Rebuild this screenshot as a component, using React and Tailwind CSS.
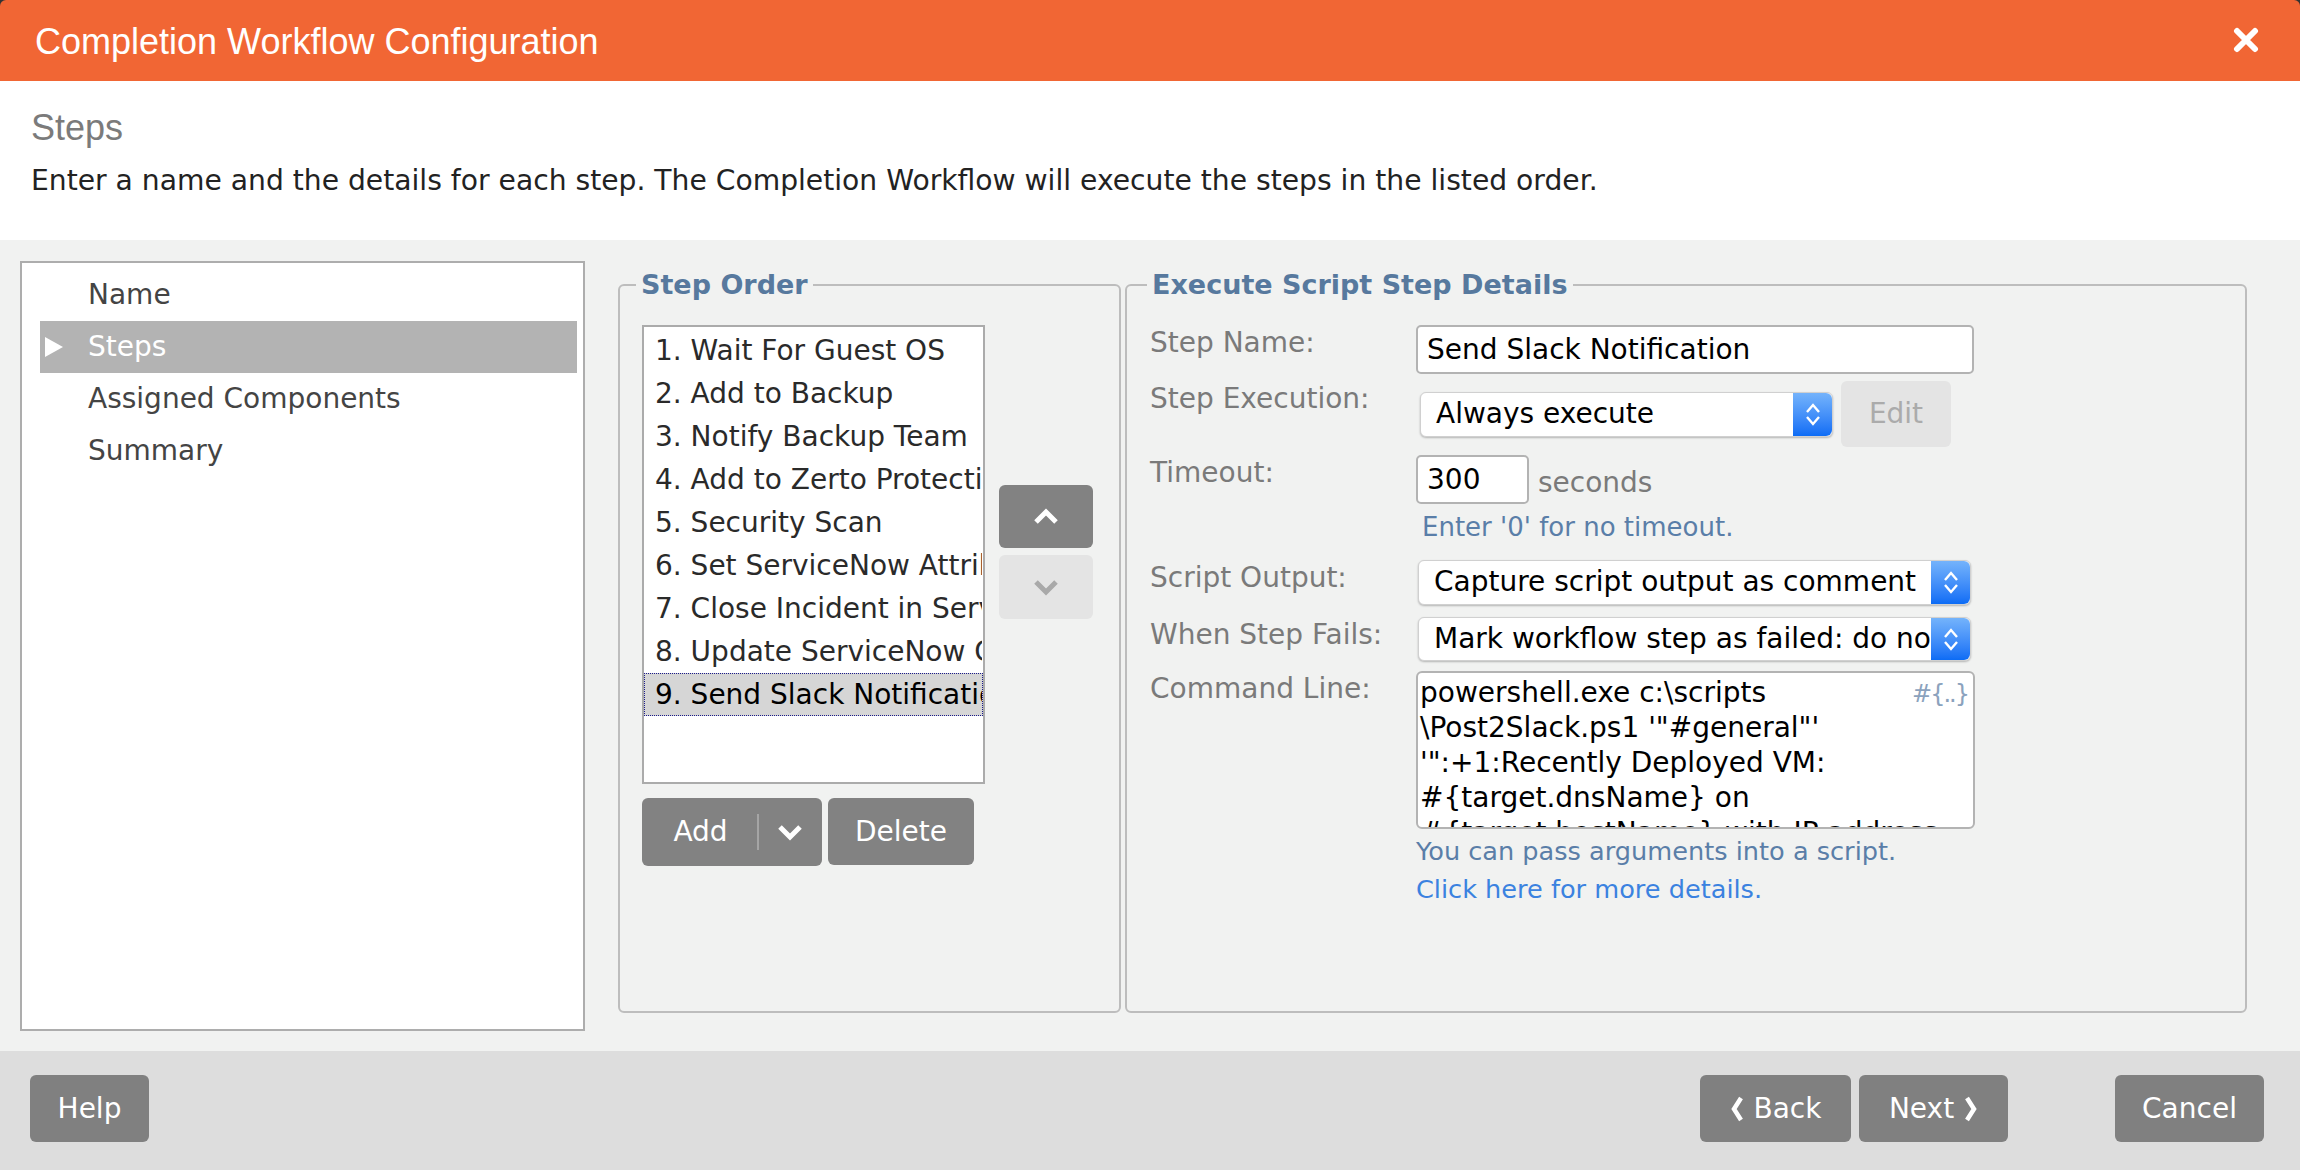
import React from "react";

const BODY = "font-['DejaVu_Sans',Verdana,sans-serif]";
const ARIAL = "font-['Liberation_Sans',Arial,sans-serif]";

const steps = [
  "1. Wait For Guest OS",
  "2. Add to Backup",
  "3. Notify Backup Team",
  "4. Add to Zerto Protection Group",
  "5. Security Scan",
  "6. Set ServiceNow Attributes",
  "7. Close Incident in ServiceNow",
  "8. Update ServiceNow CMDB",
  "9. Send Slack Notification",
];

const Chevron = ({ dir = "down", className = "", strokeWidth = 5 }) => {
  const pts = {
    up: "3,15 13,5 23,15",
    down: "3,5 13,15 23,5",
  }[dir];
  return (
    <svg viewBox="0 0 26 20" className={className} fill="none">
      <polyline points={pts} stroke="currentColor" strokeWidth={strokeWidth} strokeLinejoin="miter" strokeLinecap="butt" />
    </svg>
  );
};

const SideChevron = ({ dir = "left" }) => (
  <svg viewBox="0 0 14 26" className="w-[14px] h-[26px]" fill="none">
    <polyline
      points={dir === "left" ? "11,2 4,13 11,24" : "3,2 10,13 3,24"}
      stroke="currentColor"
      strokeWidth="4.5"
    />
  </svg>
);

const Stepper = () => (
  <div className="w-[39px] self-stretch rounded-r-[6px] bg-gradient-to-b from-[#74b3fb] to-[#0b6cf5] flex flex-col items-center justify-center gap-[3px] text-white">
    <svg viewBox="0 0 16 10" className="w-[16px] h-[10px]" fill="none">
      <polyline points="2,9 8,2 14,9" stroke="currentColor" strokeWidth="2.4" />
    </svg>
    <svg viewBox="0 0 16 10" className="w-[16px] h-[10px]" fill="none">
      <polyline points="2,1 8,8 14,1" stroke="currentColor" strokeWidth="2.4" />
    </svg>
  </div>
);

const Select = ({ value, className = "" }) => (
  <div className={`flex bg-white rounded-[6px] border border-[#d0d0d0] shadow-[0_1px_2px_rgba(0,0,0,0.25)] ${className}`}>
    <div className="flex-1 overflow-hidden whitespace-nowrap pl-[15px] text-black leading-[42px]">{value}</div>
    <Stepper />
  </div>
);

const GreyButton = ({ children, className = "" }) => (
  <button className={`bg-[#808080] text-white rounded-[6px] h-[67px] flex items-center justify-center text-[28px] ${BODY} ${className}`}>
    {children}
  </button>
);

const Label = ({ children }) => (
  <div className="w-[266px] shrink-0 leading-[36px] text-[#7a7a7a]">{children}</div>
);

export default function App() {
  return (
    <div className={`w-[2300px] h-[1170px] bg-[#333] overflow-hidden ${BODY}`}>
      <div className="h-full flex flex-col rounded-t-[6px] overflow-hidden">
        {/* header */}
        <div className="h-[81px] shrink-0 bg-[#f16634] flex items-center justify-between pl-[35px] pr-[41px] pt-[3px]">
          <h1 className={`${ARIAL} text-white text-[36px] leading-[36px]`}>Completion Workflow Configuration</h1>
          <svg viewBox="0 0 26 26" className="w-[26px] h-[26px] -mt-[4px]">
            <path d="M4 4 L22 22 M22 4 L4 22" stroke="white" strokeWidth="6" strokeLinecap="round" />
          </svg>
        </div>

        {/* intro */}
        <div className="h-[159px] shrink-0 bg-white pl-[31px] pt-[29px]">
          <h2 className={`${ARIAL} text-[36px] leading-[36px] text-[#7b7b7b]`}>Steps</h2>
          <p className="mt-[18px] text-[28.2px] leading-[34px] text-[#222]">
            Enter a name and the details for each step. The Completion Workflow will execute the steps in the listed order.
          </p>
        </div>

        {/* body */}
        <div className="h-[811px] shrink-0 bg-[#f1f2f1] flex items-start pt-[21px] pl-[20px] text-[28px]">
          {/* nav */}
          <div className="w-[565px] h-[770px] shrink-0 bg-white border-2 border-[#adadad] pt-[6px] pr-[6px] pl-[18px]">
            {["Name", "Steps", "Assigned Components", "Summary"].map((n) => {
              const active = n === "Steps";
              return (
                <div
                  key={n}
                  className={`h-[52px] flex items-center ${active ? "bg-[#b3b3b3] text-white" : "text-[#444]"}`}
                >
                  <div className="w-[48px] flex justify-center pl-[2px] pr-[22px]">
                    {active && (
                      <svg viewBox="0 0 18 20" className="w-[18px] h-[20px] shrink-0">
                        <polygon points="0,0 18,10 0,20" fill="white" />
                      </svg>
                    )}
                  </div>
                  <span className="leading-[52px]">{n}</span>
                </div>
              );
            })}
          </div>

          {/* step order */}
          <fieldset className="ml-[33px] mt-[8px] w-[503px] h-[744px] shrink-0 border-2 border-[#bdbdbd] rounded-[6px]">
            <legend className="ml-[16px] px-[5px] text-[27px] leading-[32px] font-bold text-[#57799e]">Step Order</legend>
            <div className="pl-[22px] pt-[24px]">
              <div className="flex items-start">
                <div className="w-[343px] h-[459px] bg-white border-2 border-[#ababab] pt-[2px] overflow-hidden">
                  {steps.map((s, i) => {
                    const sel = i === steps.length - 1;
                    return (
                      <div
                        key={s}
                        className={`h-[43px] leading-[41px] whitespace-nowrap overflow-hidden pl-[10px] ${
                          sel
                            ? "bg-[#d6d6d6] text-black border border-dotted border-[#1b1b8a]"
                            : "text-[#2a2a2a] border border-transparent"
                        }`}
                      >
                        {s}
                      </div>
                    );
                  })}
                </div>
                <div className="ml-[14px] mt-[160px] flex flex-col gap-[7px]">
                  <button className="w-[94px] h-[63px] rounded-[6px] bg-[#828282] text-white flex items-center justify-center">
                    <Chevron dir="up" className="w-[26px] h-[20px]" />
                  </button>
                  <button className="w-[94px] h-[64px] rounded-[6px] bg-[#e4e4e4] text-[#a9a9a9] flex items-center justify-center">
                    <Chevron dir="down" className="w-[26px] h-[20px]" />
                  </button>
                </div>
              </div>
              <div className="mt-[14px] flex gap-[6px]">
                <div className="w-[180px] h-[68px] rounded-[6px] bg-[#828282] text-white flex items-center">
                  <span className="w-[115px] text-center pl-[2px]">Add</span>
                  <span className="w-[2px] h-[36px] bg-[#a5a5a5]" />
                  <span className="flex-1 flex justify-center pr-[2px]">
                    <Chevron dir="down" className="w-[26px] h-[20px]" />
                  </span>
                </div>
                <div className="w-[146px] h-[67px] rounded-[6px] bg-[#828282] text-white flex items-center justify-center">
                  Delete
                </div>
              </div>
            </div>
          </fieldset>

          {/* details */}
          <fieldset className="ml-[4px] mt-[8px] w-[1122px] h-[744px] shrink-0 border-2 border-[#bdbdbd] rounded-[6px]">
            <legend className="ml-[20px] px-[5px] text-[27px] leading-[32px] font-bold text-[#57799e]">
              Execute Script Step Details
            </legend>
            <div className="pl-[23px] pt-[24px]">
              <div className="flex items-start">
                <Label>Step Name:</Label>
                <div className="w-[558px] h-[49px] bg-white border-2 border-[#b3b3b3] rounded-[5px] pl-[9px] leading-[45px] text-black">
                  Send Slack Notification
                </div>
              </div>

              <div className="mt-[7px] flex items-start">
                <Label>Step Execution:</Label>
                <div className="flex items-center h-[66px]">
                  <Select value="Always execute" className="ml-[4px] w-[413px] h-[45px]" />
                  <div className="ml-[8px] w-[110px] h-[66px] rounded-[6px] bg-[#e4e4e4] text-[#ababab] flex items-center justify-center">
                    Edit
                  </div>
                </div>
              </div>

              <div className="mt-[8px] flex items-start">
                <Label>Timeout:</Label>
                <div className="w-[113px] h-[49px] bg-white border-2 border-[#b3b3b3] rounded-[5px] pl-[9px] leading-[45px] text-black">
                  300
                </div>
                <span className="ml-[9px] leading-[55px] text-[#7a7a7a]">seconds</span>
              </div>
              <div className="ml-[272px] mt-0 text-[26px] leading-[34px] text-[#5a7ea8]">Enter '0' for no timeout.</div>

              <div className="mt-[16px] flex items-start">
                <Label>Script Output:</Label>
                <Select value="Capture script output as comment" className="ml-[2px] w-[553px] h-[45px]" />
              </div>

              <div className="mt-[12px] flex items-start">
                <Label>When Step Fails:</Label>
                <Select
                  value="Mark workflow step as failed: do not continue workflow"
                  className="ml-[2px] w-[553px] h-[44px]"
                />
              </div>

              <div className="mt-[10px] flex items-start">
                <Label>Command Line:</Label>
                <div className="relative w-[559px] h-[158px] bg-white border-2 border-[#b3b3b3] rounded-[6px] pl-[2px] pt-[2px] overflow-hidden text-black leading-[35px]">
                  <div>powershell.exe c:\scripts</div>
                  <div>\Post2Slack.ps1 '"#general"'</div>
                  <div>'":+1:Recently Deployed VM:</div>
                  <div>#{"{"}target.dnsName{"}"} on</div>
                  <div>#{"{"}target.hostName{"}"} with IP address</div>
                  <span className="absolute top-[6px] right-[5px] text-[24px] leading-[30px] text-[#8ba2bd] tracking-[-2px]">
                    #{"{..}"}
                  </span>
                </div>
              </div>
              <div className="ml-[266px] mt-[5px] text-[25.6px] leading-[34px] text-[#5a7ea8]">
                You can pass arguments into a script.
              </div>
              <div className="ml-[266px] mt-[4px] text-[25.6px] leading-[34px] text-[#3b82e0]">
                Click here for more details.
              </div>
            </div>
          </fieldset>
        </div>

        {/* footer */}
        <div className="flex-1 bg-[#dddddd] flex items-start pt-[24px] pl-[30px] pr-[36px]">
          <GreyButton className="w-[119px]">Help</GreyButton>
          <div className="flex-1" />
          <GreyButton className="w-[151px] gap-[10px]">
            <SideChevron dir="left" />
            Back
          </GreyButton>
          <GreyButton className="ml-[8px] w-[149px] gap-[10px]">
            Next
            <SideChevron dir="right" />
          </GreyButton>
          <GreyButton className="ml-[107px] w-[149px]">Cancel</GreyButton>
        </div>
      </div>
    </div>
  );
}
